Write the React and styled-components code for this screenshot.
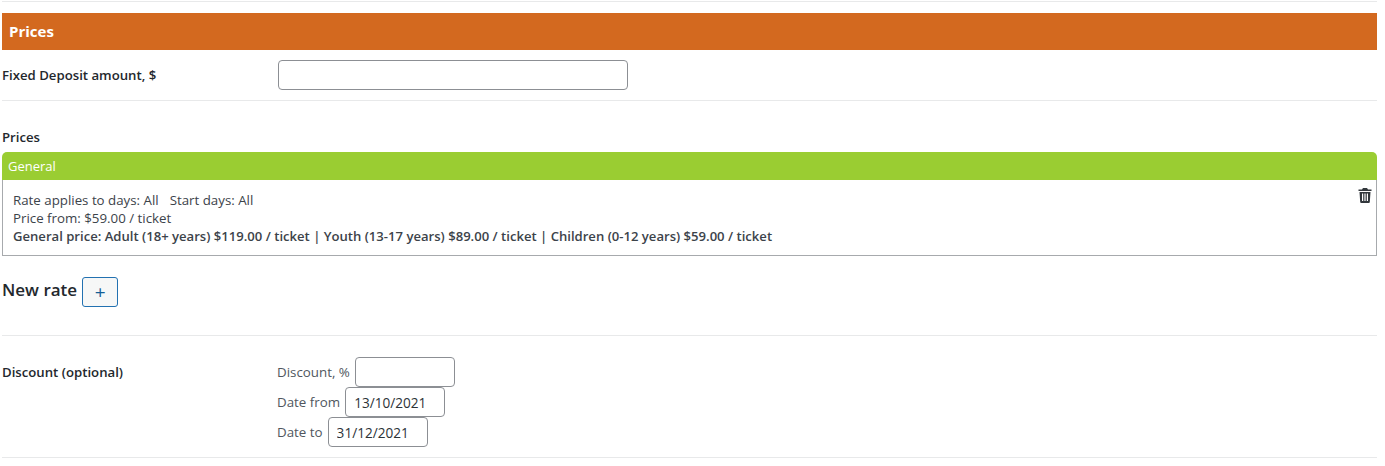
import React from "react";
import styled, { createGlobalStyle } from "styled-components";

const GlobalStyle = createGlobalStyle`
  body {
    margin: 0;
    background: #fff;
    color: #3c434a;
    font-family: "Open Sans", "Noto Sans", sans-serif;
    font-size: 13.2px;
    line-height: 18px;
  }
`;

const Page = styled.div`
  width: 1375px;
  margin-left: 2px;
  padding-top: 1px;
`;

const Rule = styled.hr`
  height: 1px;
  margin: ${(props) => props.$margin || "0"};
  border: 0;
  background: #e8e9ea;
`;

const SectionTitle = styled.h2`
  height: 37px;
  margin: 11px 0 0;
  padding-left: 7px;
  background: #d3691f;
  color: #fff;
  font-size: 15px;
  font-weight: 700;
  line-height: 37px;
`;

const FormRow = styled.div`
  box-sizing: border-box;
  display: grid;
  grid-template-columns: ${(props) => props.$labelWidth || "276px"} 1fr;
  align-items: ${(props) => props.$align || "center"};
  height: ${(props) => props.$height};
  padding-top: ${(props) => props.$top || "0"};
`;

const FieldLabel = styled.label`
  margin-top: ${(props) => props.$top || "0"};
  color: #23282d;
  font-weight: 600;
`;

const Input = styled.input`
  box-sizing: border-box;
  width: ${(props) => props.$width};
  height: 30px;
  margin: 0;
  padding: 0 8px;
  border: 1px solid #8c8f94;
  border-radius: 4px;
  background: #fff;
  color: #2c3338;
  font: 13.6px "Open Sans", "Noto Sans", sans-serif;
`;

const PricesLabel = styled.div`
  margin-top: 27px;
  color: #23282d;
  font-weight: 600;
`;

const RateCard = styled.section`
  margin-top: 6px;
`;

const RateHeader = styled.div`
  height: 28px;
  padding-left: 6px;
  border-radius: 5px 5px 0 0;
  background: #9acd32;
  color: #fff;
  font-size: 13px;
  line-height: 28px;
`;

const RateBody = styled.div`
  position: relative;
  box-sizing: border-box;
  height: 76px;
  padding: 11px 10px 0;
  border: 1px solid #a7aaad;
  border-top: 0;
`;

const RateLine = styled.div`
  display: flex;
  gap: ${(props) => props.$gap || "0"};
  font-size: ${(props) => (props.$strong ? "13.1px" : "13.3px")};
  font-weight: ${(props) => (props.$strong ? 600 : 400)};
`;

const DeleteIcon = styled.svg`
  position: absolute;
  top: 8px;
  right: 4px;
  width: 14px;
  height: 15px;
  fill: #32373c;
`;

const NewRateRow = styled.div`
  display: flex;
  align-items: center;
  gap: 5px;
  height: 30px;
  margin-top: 21px;
`;

const NewRateTitle = styled.h3`
  margin: -5px 0 0;
  color: #23282d;
  font-size: 17px;
  font-weight: 600;
  line-height: 30px;
`;

const AddButton = styled.button`
  box-sizing: border-box;
  width: 36px;
  height: 30px;
  padding: 0;
  border: 1px solid #2271b1;
  border-radius: 3px;
  background: #f6f7f7;
  color: #135e96;
  font: 19px "Open Sans", "Noto Sans", sans-serif;
`;

const DiscountFields = styled.div`
  display: flex;
  flex-direction: column;
`;

const DiscountField = styled.label`
  display: flex;
  align-items: center;
  gap: 5px;
  color: #50575e;
  font-size: 13.35px;
`;

function TrashIcon() {
  return (
    <DeleteIcon viewBox="0 0 14 15" aria-hidden="true">
      <path d="M5 0h4l1 1.500h3.500V3H.5V1.500H4zM1.500 4h11l-.7 10a1 1 0 0 1-1 1H3.200a1 1 0 0 1-1-1zM4 5.500v7.500h1.200V5.500zm2.400 0v7.500h1.200V5.500zm2.400 0v7.500H10V5.500z" fillRule="evenodd" />
    </DeleteIcon>
  );
}

export default function App() {
  return (
    <Page>
      <GlobalStyle />
      <Rule />
      <SectionTitle>Prices</SectionTitle>
      <FormRow $height="50px">
        <FieldLabel>Fixed Deposit amount, $</FieldLabel>
        <Input $width="350px" />
      </FormRow>
      <Rule />
      <PricesLabel>Prices</PricesLabel>
      <RateCard>
        <RateHeader>General</RateHeader>
        <RateBody>
          <RateLine $gap="11px">
            <span>Rate applies to days: All</span>
            <span>Start days: All</span>
          </RateLine>
          <RateLine>Price from: $59.00 / ticket</RateLine>
          <RateLine $strong>
            General price: Adult (18+ years) $119.00 / ticket | Youth (13-17 years) $89.00 / ticket | Children (0-12 years) $59.00 / ticket
          </RateLine>
          <TrashIcon />
        </RateBody>
      </RateCard>
      <NewRateRow>
        <NewRateTitle>New rate</NewRateTitle>
        <AddButton>+</AddButton>
      </NewRateRow>
      <Rule $margin="28px 0 0" />
      <FormRow $align="start" $labelWidth="275px" $height="121px" $top="21px">
        <FieldLabel as="div" $top="6px">Discount (optional)</FieldLabel>
        <DiscountFields>
          <DiscountField>Discount, % <Input $width="100px" /></DiscountField>
          <DiscountField>Date from <Input $width="100px" defaultValue="13/10/2021" /></DiscountField>
          <DiscountField>Date to <Input $width="100px" defaultValue="31/12/2021" /></DiscountField>
        </DiscountFields>
      </FormRow>
      <Rule />
    </Page>
  );
}
